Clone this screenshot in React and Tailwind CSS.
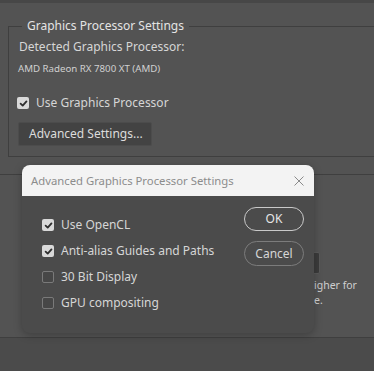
import React from "react";

function Check({ checked }) {
  if (checked) {
    return (
      <span className="flex h-[12px] w-[12px] shrink-0 items-center justify-center rounded-[2px] bg-[#d9d9d9]">
        <svg width="9" height="9" viewBox="0 0 10 10" fill="none">
          <path d="M1.8 5.2 L4.1 7.4 L8.3 2.6" stroke="#2e2e2e" strokeWidth="2" strokeLinecap="round" strokeLinejoin="round" />
        </svg>
      </span>
    );
  }
  return <span className="h-[12px] w-[12px] shrink-0 rounded-[2px] border border-[#7a7a7a] bg-[#474747]" />;
}

const options = [
  { label: "Use OpenCL", checked: true },
  { label: "Anti-alias Guides and Paths", checked: true },
  { label: "30 Bit Display", checked: false },
  { label: "GPU compositing", checked: false },
];

export default function App() {
  return (
    <div className="relative h-[371px] w-[374px] overflow-hidden bg-[#535353] font-['Noto_Sans',sans-serif] text-[12px] leading-[16px] text-[#d6d6d6]">
      <div className="h-[3px] bg-[#474747]" />

      {/* Graphics Processor group */}
      <div className="ml-[8px] mt-[23px] h-[131px] border-y border-l border-[#3f3f3f]">
        <div className="-mt-[9px] ml-[13px] w-fit bg-[#535353] px-[5px] text-[#e4e4e4]">
          Graphics Processor Settings
        </div>
        <div className="mt-[5px] pl-[10px]">Detected Graphics Processor:</div>
        <div className="mt-[7px] pl-[9px] text-[9.7px] leading-[14px] text-[#d0d0d0]">
          AMD Radeon RX 7800 XT (AMD)
        </div>
        <div className="ml-[8px] mt-[19px] flex h-[16px] items-center gap-[7px]">
          <Check checked />
          <span>Use Graphics Processor</span>
        </div>
        <button className="ml-[9px] mt-[11px] flex h-[24px] w-[134px] items-center rounded-[2px] border border-[#4c4c4c] bg-[#434343] pl-[10px] text-[#dcdcdc]">
          Advanced Settings...
        </button>
      </div>

      {/* section behind dialog */}
      <div className="mt-[17px] h-[164px] border-y border-[#3f3f3f]">
        <div className="ml-[260px] mt-[77px] h-[22px] w-[60px] rounded-[2px] border border-[#5a5a5a] bg-[#3b3b3b]" />
        <p className="ml-[314px] mt-[4px] text-[10.5px] leading-[14.5px] text-[#cfcfcf]">
          igher for
          <br />
          e.
        </p>
      </div>
      <div className="h-full bg-[#4b4b4b]" />

      {/* dialog */}
      <div className="absolute left-[22px] top-[165px] h-[168px] w-[292px] overflow-hidden rounded-[8px] bg-[#4b4b4b] shadow-[0_2px_8px_rgba(0,0,0,0.25)]">
        <div className="flex h-[31px] items-center justify-between bg-[#f3f3f3] pl-[9px] pr-[10px] text-[11.3px] text-[#8c8c8c]">
          <span>Advanced Graphics Processor Settings</span>
          <svg width="10" height="10" viewBox="0 0 10 10">
            <path d="M0.5 0.5 L9.5 9.5 M9.5 0.5 L0.5 9.5" stroke="#8a8a8a" strokeWidth="1" />
          </svg>
        </div>
        <div className="flex justify-between pl-[20px] pr-[10px]">
          <div className="flex flex-col gap-[10px] pt-[21px]">
            {options.map((o) => (
              <div key={o.label} className="flex h-[16px] items-center gap-[7px]">
                <Check checked={o.checked} />
                <span>{o.label}</span>
              </div>
            ))}
          </div>
          <div className="flex flex-col gap-[10px] pt-[11px]">
            <button className="h-[24px] w-[60px] rounded-full border-[1.5px] border-[#c9c9c9] text-[#e6e6e6]">OK</button>
            <button className="h-[25px] w-[60px] rounded-full border border-[#7c7c7c] text-[#d6d6d6]">Cancel</button>
          </div>
        </div>
      </div>
    </div>
  );
}
